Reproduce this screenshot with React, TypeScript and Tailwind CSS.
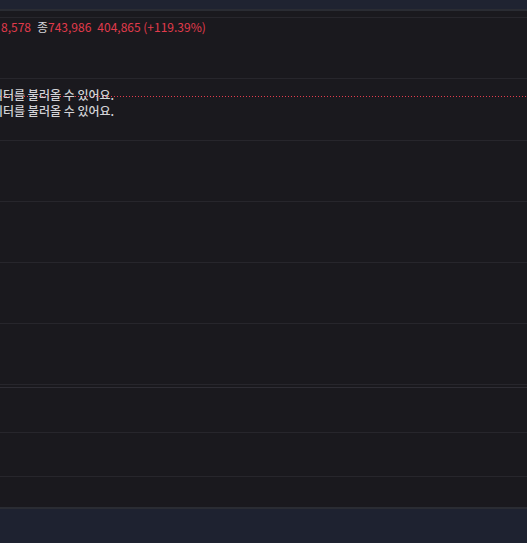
import React from 'react';

const font = { fontFamily: '"Noto Sans CJK KR", "Noto Sans", sans-serif' };

function Row({ h, children }: { h: string; children?: React.ReactNode }) {
  return <div className={`relative border-b border-[#27262c] ${h}`}>{children}</div>;
}

export default function App() {
  return (
    <div className="w-[527px] h-[543px] overflow-hidden bg-[#1a191e] flex flex-col" style={font}>
      <div className="h-[9px] bg-[#1f2331]" />
      <div className="h-[2px] bg-[#2a2c33]" />
      <div className="h-[7px] border-b border-[#27262c]" />

      <Row h="h-[61px]">
        <div className="flex items-center gap-[6px] pt-[1px] text-[12px] leading-[16px] text-[#e23b4c] whitespace-nowrap">
          <span className="ml-[1px]">8,578</span>
          <span>
            <span className="text-[#d2d2d6]">종</span>743,986
          </span>
          <span>404,865 (+119.39%)</span>
        </div>
      </Row>

      <Row h="h-[62px]">
        <div className="absolute left-0 right-0 top-[17px] h-px bg-[repeating-linear-gradient(90deg,#e23b4c_0px,#e23b4c_1px,transparent_1px,transparent_3px)]" />
        <div className="relative pt-[8px] -ml-[19px] text-[12px] leading-[16px] font-medium text-[#d2d2d6] whitespace-nowrap">
          <div>데이터를 불러올 수 있어요.</div>
          <div>데이터를 불러올 수 있어요.</div>
        </div>
      </Row>

      <Row h="h-[61px]" />
      <Row h="h-[61px]" />
      <Row h="h-[61px]" />
      <Row h="h-[61px]" />

      <div className="h-[2px]" />
      <div className="h-px bg-[#2e2d34]" />

      <Row h="h-[45px]" />
      <Row h="h-[44px]" />
      <div className="h-[30px]" />
      <div className="h-[2px] bg-[#2a2c33]" />
      <div className="flex-1 bg-[#1e2230]" />
    </div>
  );
}
